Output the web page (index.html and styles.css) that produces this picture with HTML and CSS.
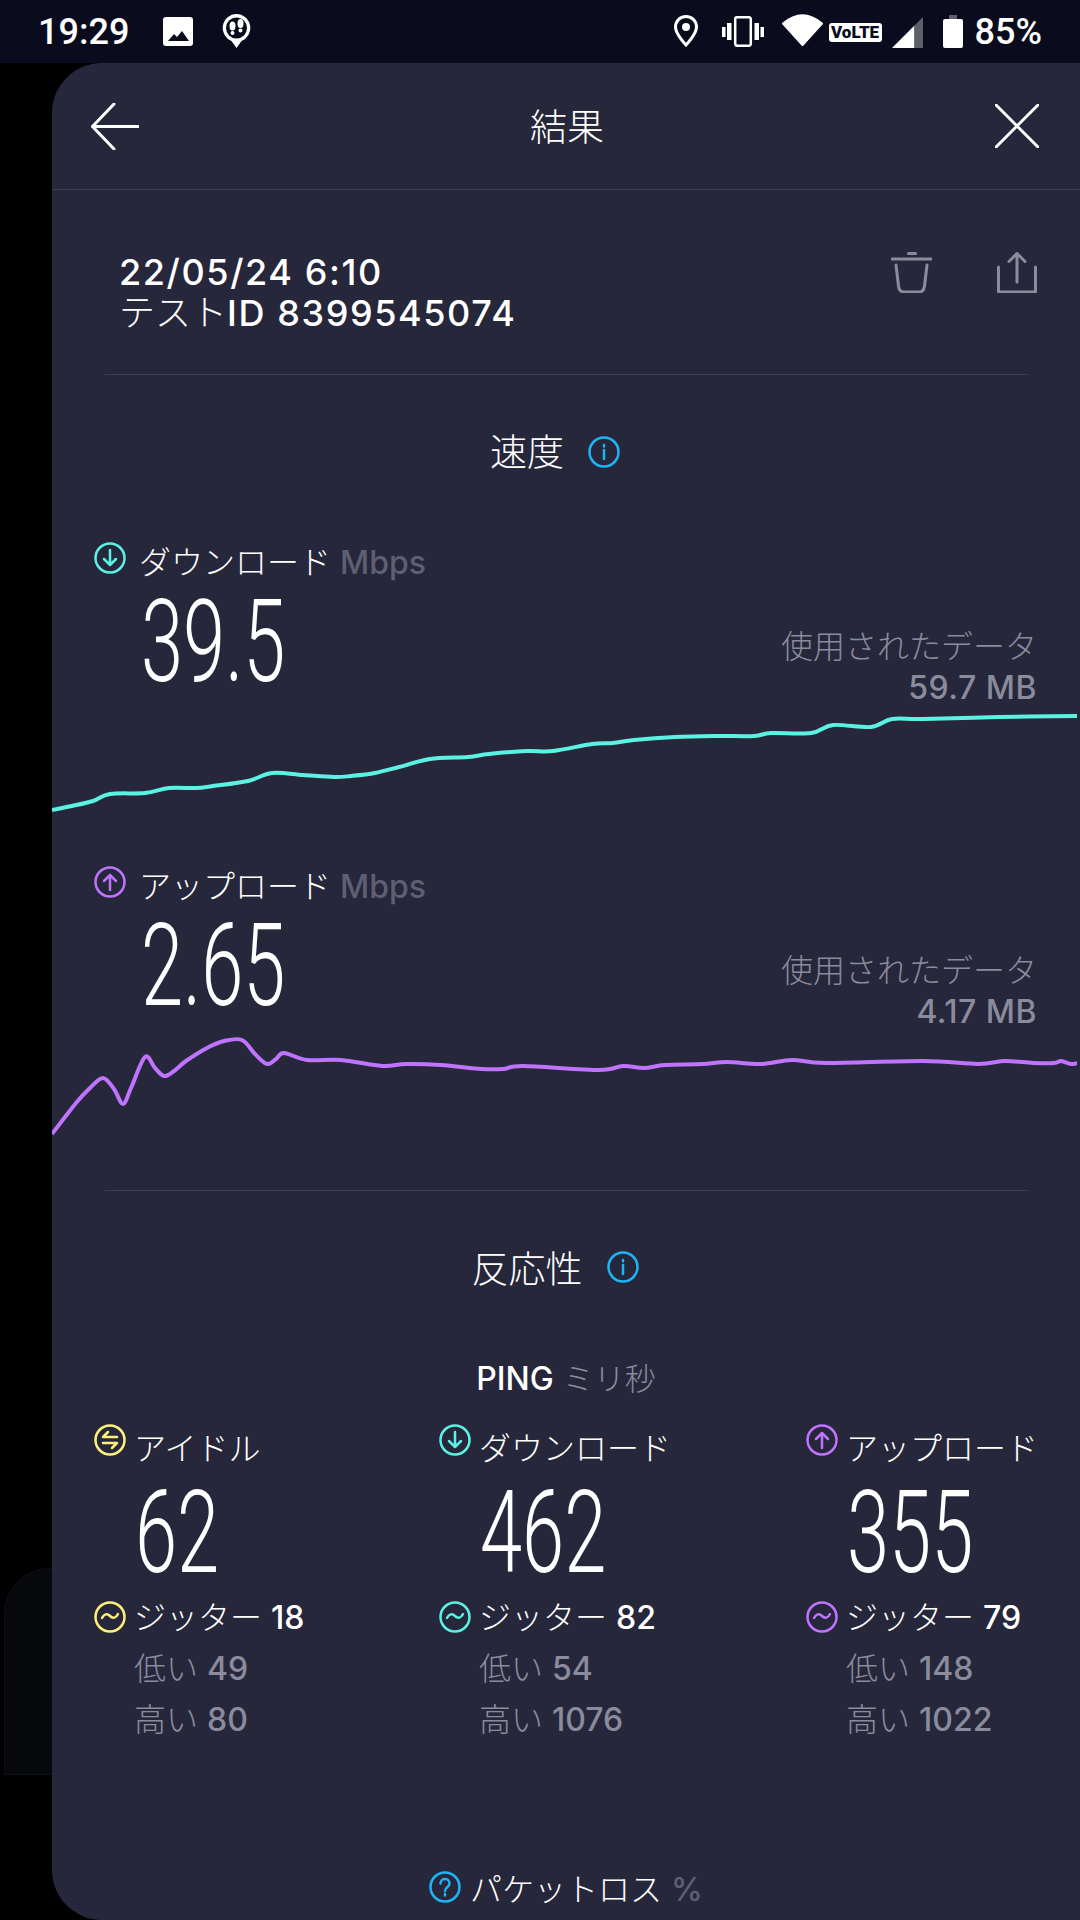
FILE: index.html
```html
<!DOCTYPE html>
<html lang="ja">
<head>
  <meta charset="UTF-8">
  <title>結果</title>
  <link rel="stylesheet" href="styles.css">
</head>
<body>
  <svg class="defs" width="0" height="0">
    <symbol id="i-down" viewBox="0 0 32 32"><circle cx="16" cy="16" r="14.5"/><path d="M16 8v15M10 17l6 6 6-6"/></symbol>
    <symbol id="i-up" viewBox="0 0 32 32"><circle cx="16" cy="16" r="14.5"/><path d="M16 24V9M10 15l6-6 6 6"/></symbol>
    <symbol id="i-idle" viewBox="0 0 32 32"><circle cx="16" cy="16" r="14.5"/><path d="M23 13H9l5-5M9 19h14l-5 5"/></symbol>
    <symbol id="i-jitter" viewBox="0 0 32 32"><circle cx="16" cy="16" r="14.5"/><path d="M8 17c2-4 5-5 8-2s6 2 8-2"/></symbol>
    <symbol id="i-info" viewBox="0 0 32 32"><circle cx="16" cy="16" r="14.5"/><path d="M16 14v9M16 9v1.5"/></symbol>
    <symbol id="i-help" viewBox="0 0 32 32"><circle cx="16" cy="16" r="14.5"/><path d="M11.5 12.5c0-6 9-6 9 0 0 3.500-4.500 3.500-4.500 7.500M16 23v1.500"/></symbol>
  </svg>

  <div class="back-card"></div>

  <div class="status-bar">
    <span class="clock">19:29</span>
    <svg class="st-image" width="30" height="29" viewBox="0 0 30 29"><rect width="30" height="29" rx="3" fill="#fff"/><path d="M5 24l6-7 3 3 5-6 7 10z" fill="#0a0c1d"/></svg>
    <svg class="st-steps" width="29" height="34" viewBox="0 0 29 34">
      <path d="M14.500 0a14 14 0 0 1 5 27l-5 7-5-7a14 14 0 0 1 5-27z" fill="#fff"/>
      <circle cx="14.500" cy="14" r="10.500" fill="#0a0c1d"/>
      <ellipse cx="10.500" cy="12" rx="3" ry="4.500" fill="#fff"/><circle cx="10.500" cy="19" r="2" fill="#fff"/>
      <ellipse cx="18.500" cy="9.500" rx="3" ry="4.500" fill="#fff"/><circle cx="18.500" cy="16.500" r="2" fill="#fff"/>
    </svg>
    <span class="spacer"></span>
    <svg class="st-pin" width="24" height="32" viewBox="0 0 24 32"><path d="M12 1.500C5.500 1.500 1.500 6.500 1.500 12 1.500 19 12 30 12 30s10.500-11 10.500-18C22.500 6.500 18.500 1.500 12 1.500z" fill="none" stroke="#fff" stroke-width="3"/><circle cx="12" cy="12" r="4" fill="#fff"/></svg>
    <svg class="st-vibrate" width="42" height="31" viewBox="0 0 42 31"><rect x="13.200" y="1.200" width="15.600" height="28.600" rx="2" fill="none" stroke="#fff" stroke-width="2.500"/><path d="M0 11h3.500v10H0zM5 7h4.500v17H5zM32.500 7H37v17h-4.500zM38.500 11H42v10h-3.500z" fill="#fff"/></svg>
    <svg class="st-wifi" width="41" height="32" viewBox="0 0 41 32"><path d="M1 9.500Q20.500-7 40 9.500L20.500 31z" fill="#fff" stroke="#fff" stroke-width="2" stroke-linejoin="round"/></svg>
    <span class="volte">VoLTE</span>
    <svg class="st-signal" width="31" height="31" viewBox="0 0 31 31"><path d="M0 31L22.500 8.500V31z" fill="#fff"/><path d="M22.500 8.500L31 0v31h-8.500z" fill="#5f5f69"/></svg>
    <svg class="st-battery" width="20" height="33" viewBox="0 0 20 33"><path d="M6 0h8v5H6z" fill="#5f5f69"/><rect y="4" width="20" height="29" rx="2" fill="#fff"/></svg>
    <span class="percent">85%</span>
  </div>

  <div class="card">
    <div class="topbar">
      <svg width="48" height="47" viewBox="0 0 48 47" class="line-icon"><path d="M23 1L1.500 23.500 23 46M1.500 23.500H47"/></svg>
      <span class="topbar-title">結果</span>
      <svg width="44" height="44" viewBox="0 0 44 44" class="line-icon"><path d="M1 1l42 42M43 1L1 43"/></svg>
    </div>

    <div class="test-head">
      <div class="test-info">
        <div>22/05/24 6:10</div>
        <div><span class="test-kana">テスト</span>ID 8399545074</div>
      </div>
      <div class="test-actions">
        <svg width="41" height="41" viewBox="0 0 41 41" class="tool-icon"><path d="M1 7h39M17.500 1.500h7M5 13l2.500 21c.5 4 2.500 6 5.500 6h15c3 0 5-2 5.500-6L36 13"/></svg>
        <svg width="40" height="41" viewBox="0 0 40 41" class="tool-icon"><path d="M1.500 15v25H38.500V15M20 30V1.500M12 9.500l8-8 8 8"/></svg>
      </div>
    </div>

    <div class="rule"></div>

    <div class="section-title speed-title">
      <span>速度</span>
      <svg class="icon icon-blue"><use href="#i-info"/></svg>
    </div>

    <div class="metric metric-down">
      <div class="metric-label">
        <svg class="icon icon-teal"><use href="#i-down"/></svg>
        <span class="metric-text">ダウンロード <span class="unit">Mbps</span></span>
      </div>
      <div class="metric-body">
        <div class="big">39.5</div>
        <div class="used">
          <div>使用されたデータ</div>
          <div class="used-value">59.7 MB</div>
        </div>
      </div>
    </div>
    <svg class="chart chart-down" width="1028" height="101" viewBox="52 711 1028 101">
      <path stroke="#5cf2e3" data-points="52,810 72,806 93,801 110,794 145,793 169,788 196,788 213,786 248,781 272,773 303,775 334,777 351,776 375,773 399,767 430,759 468,757 489,754 527,751 553,751 592,744 613,743 634,740 675,737 716,736 754,736 771,733 811,733 833,725 871,727 892,719 923,719 999,717 1077,716"/>
    </svg>

    <div class="metric metric-up">
      <div class="metric-label">
        <svg class="icon icon-purple"><use href="#i-up"/></svg>
        <span class="metric-text">アップロード <span class="unit">Mbps</span></span>
      </div>
      <div class="metric-body">
        <div class="big">2.65</div>
        <div class="used">
          <div>使用されたデータ</div>
          <div class="used-value">4.17 MB</div>
        </div>
      </div>
    </div>
    <svg class="chart chart-up" width="1028" height="110" viewBox="52 1034 1028 110">
      <path stroke="#bf73ff" data-points="52,1133 76,1102 90,1087 103,1077 114,1088 123,1103 131,1087 145,1056 155,1067 164,1075 174,1070 186,1060 207,1047 224,1040 242,1039 255,1053 267,1063 276,1058 284,1052 307,1059 341,1059 382,1065 406,1063 441,1064 482,1068 503,1068 523,1065 599,1069 623,1065 644,1067 665,1064 702,1063 727,1061 761,1063 792,1059 826,1062 923,1060 978,1063 1005,1060 1033,1062 1054,1062 1061,1060 1071,1063 1077,1062"/>
    </svg>

    <div class="rule"></div>

    <div class="section-title response-title">
      <span>反応性</span>
      <svg class="icon icon-blue"><use href="#i-info"/></svg>
    </div>

    <div class="ping-title"><span class="ping-word">PING</span> <span class="ping-unit">ミリ秒</span></div>

    <div class="ping-grid">
      <div class="ping-col col-idle">
        <div class="ping-head">
          <svg class="icon"><use href="#i-idle"/></svg>
          <span>アイドル</span>
        </div>
        <div class="big">62</div>
        <div class="jitter">
          <svg class="icon"><use href="#i-jitter"/></svg>
          <span class="jitter-text">ジッター <b>18</b></span>
        </div>
        <div class="range first">低い <b>49</b></div>
        <div class="range">高い <b>80</b></div>
      </div>
      <div class="ping-col col-down">
        <div class="ping-head">
          <svg class="icon"><use href="#i-down"/></svg>
          <span>ダウンロード</span>
        </div>
        <div class="big">462</div>
        <div class="jitter">
          <svg class="icon"><use href="#i-jitter"/></svg>
          <span class="jitter-text">ジッター <b>82</b></span>
        </div>
        <div class="range first">低い <b>54</b></div>
        <div class="range">高い <b>1076</b></div>
      </div>
      <div class="ping-col col-up">
        <div class="ping-head">
          <svg class="icon"><use href="#i-up"/></svg>
          <span>アップロード</span>
        </div>
        <div class="big">355</div>
        <div class="jitter">
          <svg class="icon"><use href="#i-jitter"/></svg>
          <span class="jitter-text">ジッター <b>79</b></span>
        </div>
        <div class="range first">低い <b>148</b></div>
        <div class="range">高い <b>1022</b></div>
      </div>
    </div>

    <div class="packet">
      <svg class="icon icon-blue"><use href="#i-help"/></svg>
      <span>パケットロス <span class="unit">%</span></span>
    </div>
  </div>
  <script src="chart.js"></script>
</body>
</html>
```

FILE: styles.css
```css
html, body {
  margin: 0;
  padding: 0;
}
body {
  position: relative;
  width: 1080px;
  height: 1920px;
  overflow: hidden;
  background: #000;
  color: #fff;
  font-family: "Inter", "Noto Sans CJK JP", sans-serif;
  font-size: 32px;
}
.defs {
  position: absolute;
}
b {
  font-weight: 500;
}

/* status bar */
.status-bar {
  display: flex;
  align-items: center;
  height: 63px;
  padding: 0 38px 0 38px;
  background: #0a0c1d;
  font-family: "Roboto", sans-serif;
  font-weight: 500;
}
.status-bar svg {
  flex: none;
}
.clock {
  font-size: 36px;
  width: 91px;
}
.st-image {
  margin-left: 34px;
  margin-top: -1px;
}
.st-steps {
  margin-left: 29px;
  margin-top: -1px;
}
.spacer {
  flex: 1;
}
.st-pin {
  margin-top: -1px;
}
.st-vibrate {
  margin-left: 24px;
  margin-top: -1px;
}
.st-wifi {
  margin-left: 18px;
  margin-top: -3px;
}
.volte {
  margin-left: 6px;
  margin-top: 1px;
  width: 53px;
  height: 19px;
  line-height: 19px;
  text-align: center;
  background: #fff;
  border-radius: 3px;
  color: #0a0c1d;
  font-size: 17px;
  font-weight: 900;
}
.st-signal {
  margin-left: 10px;
  margin-top: 1px;
}
.st-battery {
  margin-left: 20px;
  margin-top: 0;
}
.percent {
  margin-left: 12px;
  font-size: 36px;
}

/* card */
.back-card {
  position: absolute;
  left: 4px;
  top: 1568px;
  width: 100px;
  height: 205px;
  background: #07080c;
  border: 1px solid #101118;
  border-radius: 46px 0 0 0;
}
.card {
  position: relative;
  margin-left: 52px;
  height: 1857px;
  background: #26273b;
  border-radius: 50px 0 0 50px;
}
.topbar {
  box-sizing: border-box;
  display: flex;
  justify-content: space-between;
  align-items: center;
  height: 127px;
  padding: 0 41px 0 39px;
  border-bottom: 1px solid #3c3d52;
}
.topbar-title {
  padding-bottom: 3px;
  font-size: 37px;
  font-weight: 300;
}
.line-icon path {
  fill: none;
  stroke: #fff;
  stroke-width: 3;
  stroke-linecap: round;
  stroke-linejoin: round;
}
.test-head {
  display: flex;
  justify-content: space-between;
  align-items: flex-start;
  box-sizing: border-box;
  height: 184px;
  padding: 62px 43px 0 67px;
}
.test-info {
  font-size: 36px;
  font-weight: 500;
  letter-spacing: 1.6px;
  line-height: 41px;
  white-space: nowrap;
}
.test-kana {
  font-size: 36px;
  font-weight: 300;
  letter-spacing: 0;
}
.test-actions {
  display: flex;
  gap: 65px;
}
.tool-icon path {
  fill: none;
  stroke: #8a8b9c;
  stroke-width: 3;
  stroke-linecap: round;
  stroke-linejoin: round;
}
.rule {
  height: 1px;
  margin: 0 52px 0 53px;
  background: #3c3d52;
}
.icon {
  flex: none;
  width: 32px;
  height: 32px;
  fill: none;
  stroke: currentColor;
  stroke-width: 2.5;
  stroke-linecap: round;
  stroke-linejoin: round;
}
.icon-blue { color: #1cb4f5; }
.icon-teal { color: #5cf2e3; }
.icon-purple { color: #bf73ff; }

.section-title {
  display: flex;
  justify-content: center;
  align-items: center;
  gap: 24px;
  height: 40px;
  padding-right: 22px;
  font-size: 37px;
  font-weight: 300;
}
.speed-title {
  margin-top: 55px;
}
.speed-title .icon {
  margin-top: 3px;
}
.response-title {
  margin-top: 56px;
}

/* speed rows */
.metric {
  padding-left: 42px;
}
.metric-down {
  margin-top: 68px;
}
.metric-up {
  margin-top: 50px;
}
.metric-label {
  display: flex;
  align-items: center;
  gap: 13px;
  height: 40px;
  font-weight: 300;
}
.metric-text {
  padding-top: 3px;
}
.unit {
  color: #5e5f72;
  font-weight: 500;
}
.metric-body {
  display: flex;
  justify-content: space-between;
  align-items: flex-end;
  height: 133px;
  padding: 0 43px 0 47px;
}
.metric-body .big {
  align-self: flex-start;
}
.big {
  height: 128px;
  line-height: 128px;
  font-family: "Roboto", sans-serif;
  font-size: 115px;
  font-weight: 350;
  transform: scaleX(.66);
  transform-origin: left center;
  white-space: nowrap;
}
.used {
  padding-bottom: 3px;
  color: #8a8b9c;
  line-height: 41px;
  text-align: right;
  font-weight: 300;
}
.used-value {
  font-weight: 500;
  letter-spacing: .5px;
}
.chart {
  display: block;
}
.chart path {
  fill: none;
  stroke-width: 4;
  stroke-linejoin: round;
}
.chart-up {
  margin-bottom: 45px;
}

/* ping */
.ping-title {
  display: flex;
  justify-content: center;
  gap: 9px;
  height: 40px;
  line-height: 40px;
  margin-top: 72px;
  font-size: 31px;
}
.ping-word {
  font-size: 32px;
  font-weight: 500;
}
.ping-unit {
  color: #8a8b9c;
  font-weight: 300;
}
.ping-grid {
  display: grid;
  grid-template-columns: 345px 367px 1fr;
  margin-top: 25px;
  padding-left: 42px;
}
.col-idle .icon { color: #fff27a; }
.col-down .icon { color: #5cf2e3; }
.col-up .icon { color: #bf73ff; }
.ping-head {
  display: flex;
  align-items: flex-start;
  gap: 8px;
  height: 45px;
  font-weight: 300;
  white-space: nowrap;
}
.ping-head span {
  padding-top: 5px;
  line-height: 40px;
}
.ping-col .big {
  margin-left: 41px;
}
.jitter {
  display: flex;
  align-items: center;
  gap: 8px;
  height: 40px;
  font-weight: 300;
}
.jitter-text {
  padding-bottom: 4px;
}
.range {
  height: 51px;
  line-height: 51px;
  padding-left: 40px;
  color: #8a8b9c;
  font-weight: 300;
}
.range.first {
  margin-top: 6px;
}
.packet {
  display: flex;
  justify-content: center;
  align-items: center;
  gap: 9px;
  height: 40px;
  margin-top: 122px;
  font-weight: 300;
}
```

FILE: chart.js
```js
// draws the speed lines through their samples (catmull-rom to bezier)
document.querySelectorAll(".chart path").forEach(line => {
  const pts = line.dataset.points.split(" ").map(p => p.split(",").map(Number));
  let d = `M${pts[0][0]} ${pts[0][1]}`;
  for (let i = 0; i < pts.length - 1; i++) {
    const p0 = pts[i - 1] || pts[i];
    const p1 = pts[i];
    const p2 = pts[i + 1];
    const p3 = pts[i + 2] || p2;
    const c1x = p1[0] + (p2[0] - p0[0]) / 6;
    const c1y = p1[1] + (p2[1] - p0[1]) / 6;
    const c2x = p2[0] - (p3[0] - p1[0]) / 6;
    const c2y = p2[1] - (p3[1] - p1[1]) / 6;
    d += `C${c1x} ${c1y} ${c2x} ${c2y} ${p2[0]} ${p2[1]}`;
  }
  line.setAttribute("d", d);
});
```
